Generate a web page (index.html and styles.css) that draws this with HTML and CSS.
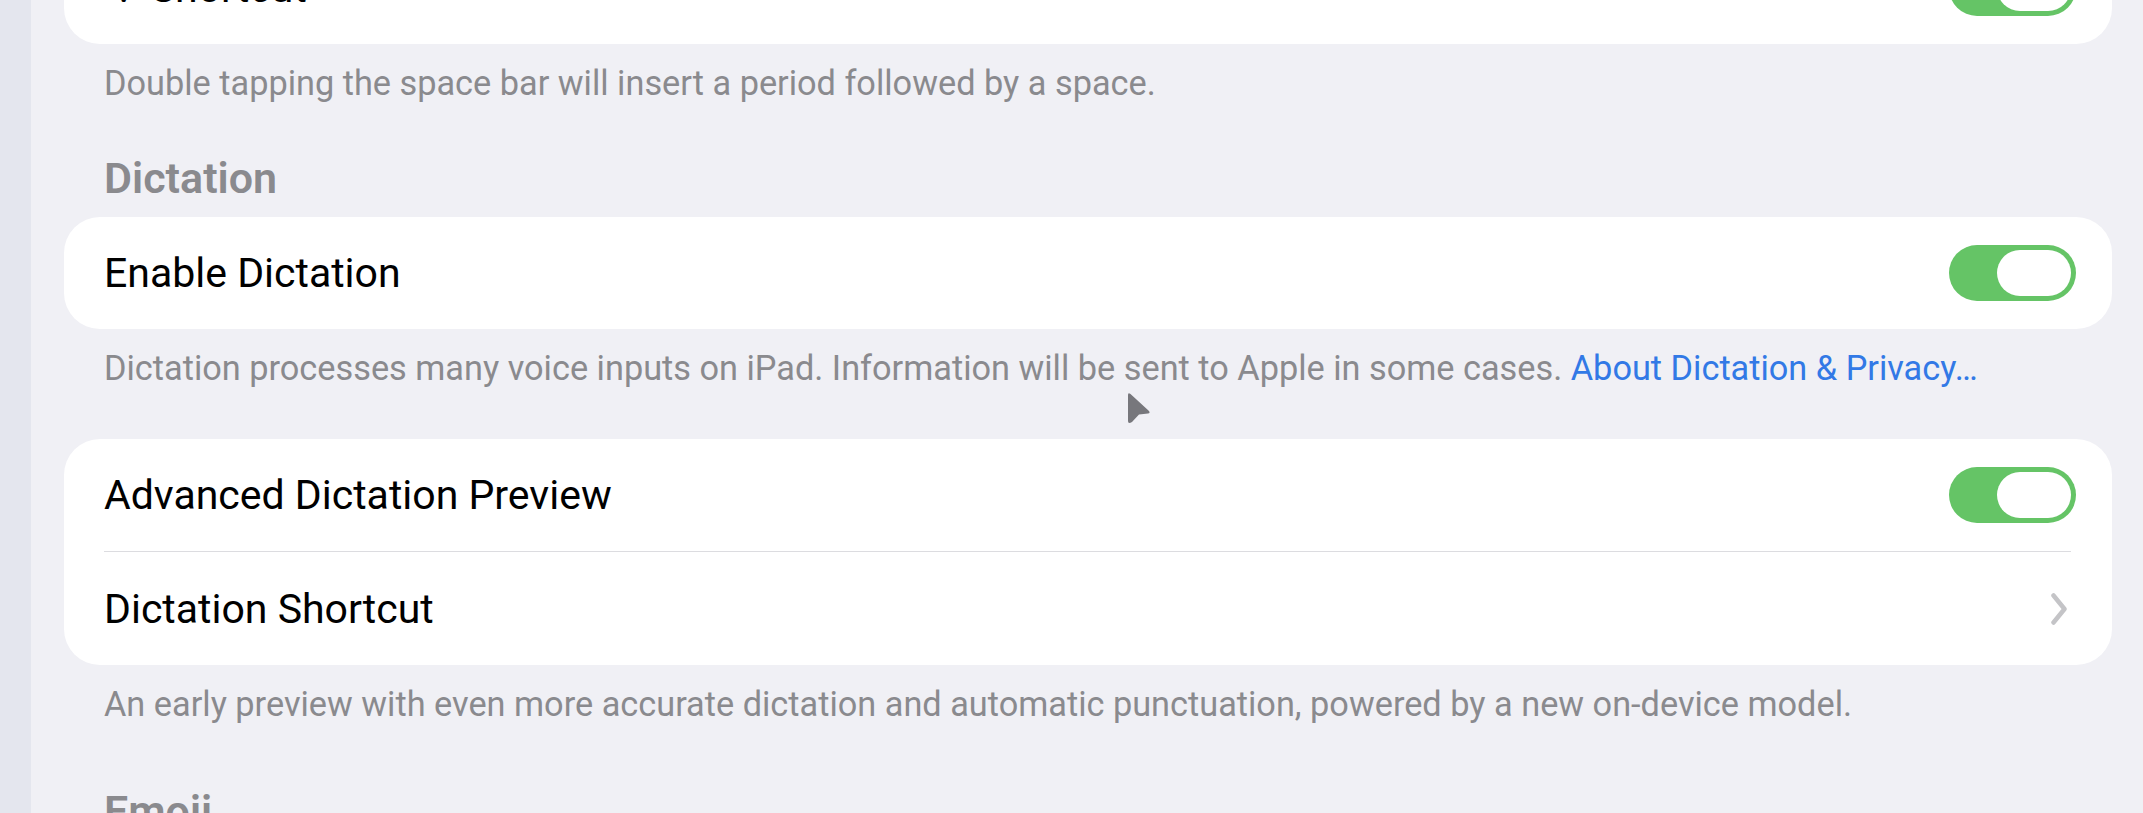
FILE: index.html
```html
<!DOCTYPE html>
<html lang="en">
<head>
  <meta charset="UTF-8">
  <meta name="viewport" content="width=device-width, initial-scale=1.0">
  <title>Keyboards</title>
  <link rel="stylesheet" href="styles.css">
</head>
<body>
  <div class="screen">
    <div class="sidebar-edge"></div>

    <div class="content">
      <div class="group">
        <div class="card">
          <div class="row">
            <span class="label">“.” Shortcut</span>
            <span class="toggle on"><span class="knob"></span></span>
          </div>
        </div>
        <p class="footer">Double tapping the space bar will insert a period followed by a space.</p>
      </div>

      <div class="group">
        <h3 class="header">Dictation</h3>
        <div class="card">
          <div class="row">
            <span class="label">Enable Dictation</span>
            <span class="toggle on"><span class="knob"></span></span>
          </div>
        </div>
        <p class="footer">Dictation processes many voice inputs on iPad. Information will be sent to Apple in some cases. <a class="link" href="#">About Dictation &amp; Privacy…</a></p>
      </div>

      <div class="group">
        <div class="card">
          <div class="row">
            <span class="label">Advanced Dictation Preview</span>
            <span class="toggle on"><span class="knob"></span></span>
          </div>
          <div class="divider"></div>
          <div class="row row-link">
            <span class="label">Dictation Shortcut</span>
            <svg class="chevron" width="16" height="32" viewBox="0 0 16 32">
              <path d="M2.5 2.5 L13.5 16 L2.5 29.5" fill="none" stroke="#c4c4c7" stroke-width="4.5" stroke-linecap="round" stroke-linejoin="round"/>
            </svg>
          </div>
        </div>
        <p class="footer">An early preview with even more accurate dictation and automatic punctuation, powered by a new on-device model.</p>
      </div>

      <div class="group group-next">
        <h3 class="header">Emoji</h3>
      </div>
    </div>

    <!-- pointer -->
    <svg class="pointer" width="30" height="36" viewBox="0 0 30 36">
      <path d="M4 5 Q4 2 6.5 4 L25 21 Q26.5 23 24 23.5 L15 24.5 L8 32 Q4 34.5 4 31 Z" fill="#77777c"/>
    </svg>
  </div>
</body>
</html>
```

FILE: styles.css
```css
html, body {
  margin: 0;
  padding: 0;
}

body {
  font-family: Roboto, "Liberation Sans", sans-serif;
  background: #f0f0f5;
  color: #000;
  height: 813px;
  overflow: hidden;
}

.screen {
  display: flex;
  height: 813px;
  position: relative;
}

.sidebar-edge {
  width: 31px;
  flex-shrink: 0;
  background: #e4e6ee;
}

.content {
  flex: 1;
  padding: 0 31px 0 33px;
  margin-top: -68px;
}

.group {
  margin-bottom: 51px;
}

.group-next {
  padding-top: 12px;
}

.header {
  margin: 0 0 15px;
  padding-left: 40px;
  font-size: 43px;
  line-height: 48px;
  font-weight: 600;
  color: #8a8a8e;
}

.card {
  background: #fff;
  border-radius: 36px;
  overflow: hidden;
}

.row {
  display: flex;
  align-items: center;
  justify-content: space-between;
  height: 112px;
  padding: 0 36px 0 40px;
}

.row-link {
  height: 113px;
  padding-right: 45px;
}

.label {
  font-size: 41px;
  line-height: 48px;
}

.divider {
  height: 1px;
  background: #dcdce0;
  margin: 0 41px 0 40px;
}

.footer {
  margin: 19px 0 0;
  padding-left: 40px;
  font-size: 34.3px;
  line-height: 40px;
  color: #8a8a8e;
}

.link {
  color: #3279e6;
  text-decoration: none;
}

.toggle {
  display: flex;
  justify-content: flex-end;
  align-items: center;
  width: 127px;
  height: 56px;
  padding: 5px;
  box-sizing: border-box;
  border-radius: 28px;
  background: #65c466;
}

.knob {
  width: 74px;
  height: 46px;
  border-radius: 23px;
  background: #fff;
}

.chevron {
  display: block;
}

.pointer {
  position: absolute;
  left: 1124px;
  top: 390px;
}
```
